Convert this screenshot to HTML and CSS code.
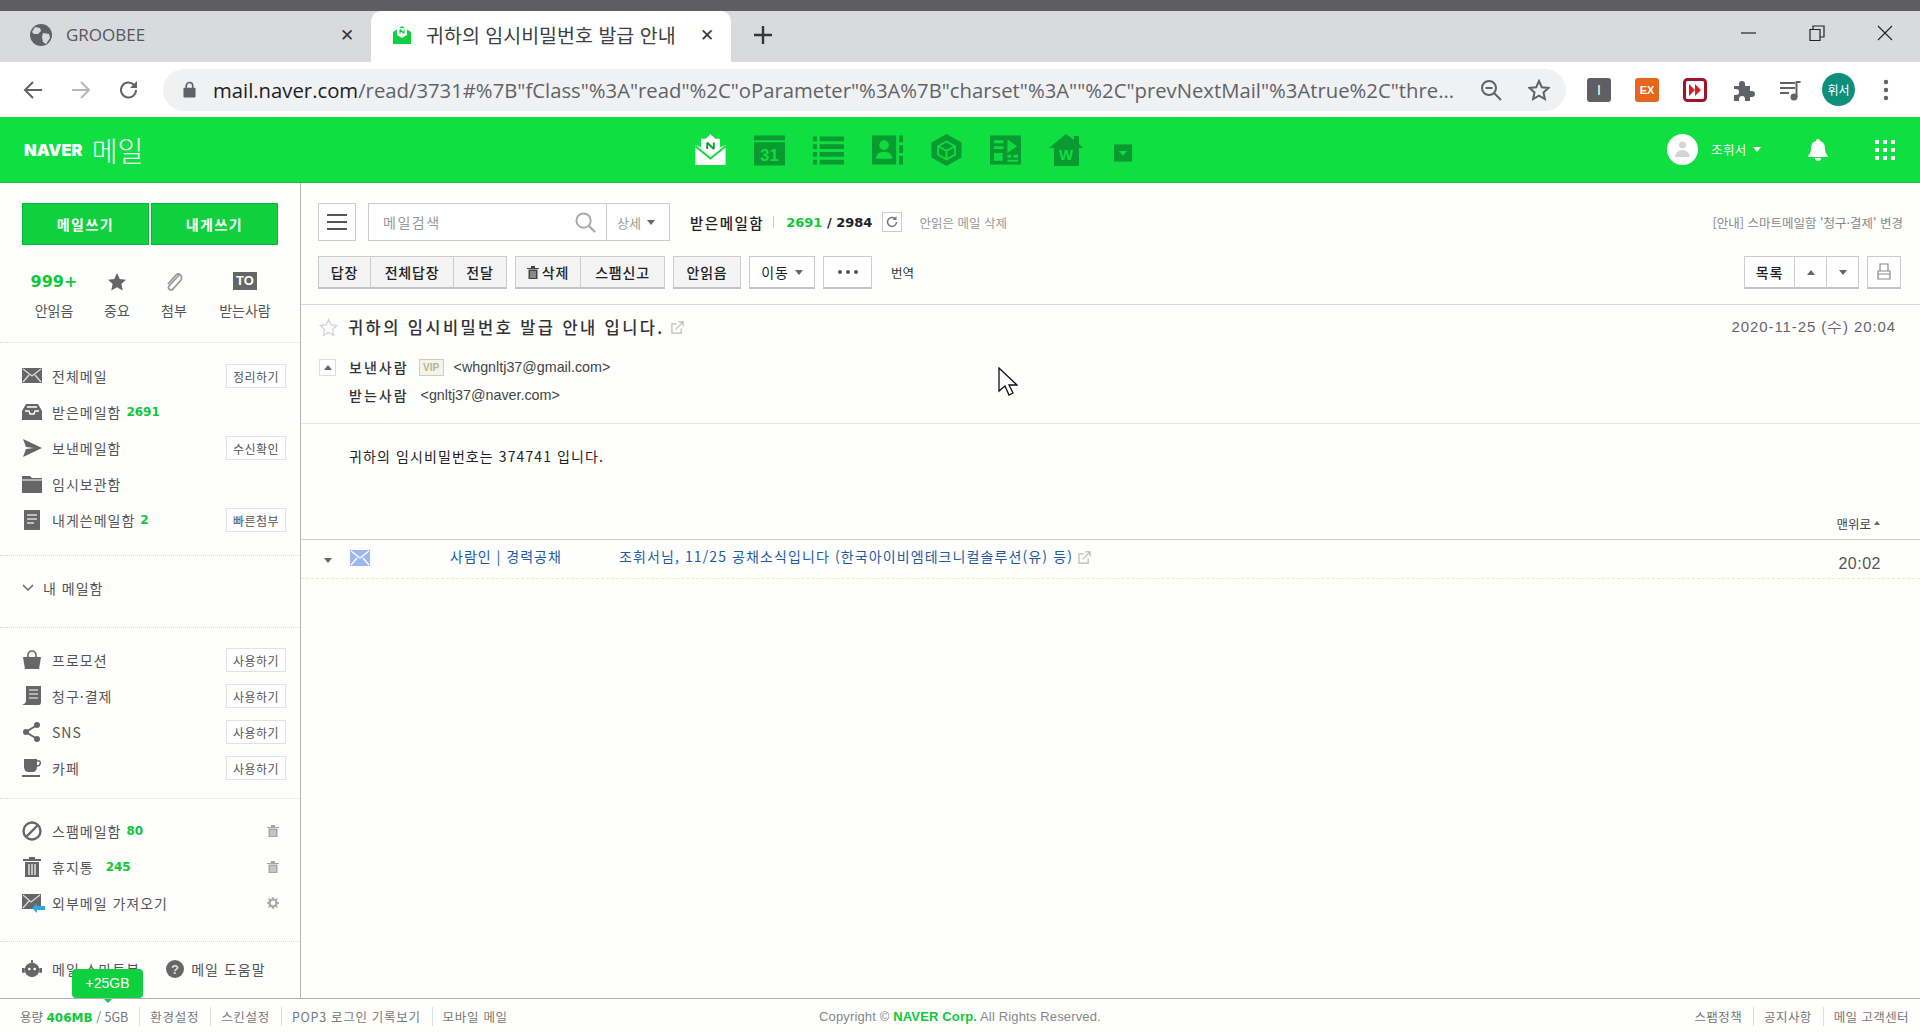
FILE: index.html
```html
<!DOCTYPE html>
<html lang="ko">
<head>
  <meta charset="UTF-8">
  <title>귀하의 임시비밀번호 발급 안내</title>
  <link rel="stylesheet" href="styles.css">
</head>
<body>
  <!-- browser chrome -->
  <div class="top-strip"></div>
  <div class="tabbar">
    <div class="tab">
      <svg class="tab-icon" viewBox="0 0 22 22"><circle cx="11" cy="11" r="11" fill="#5f6368"/><path d="M5 3l5 1 1 3-3 3-4 0-2-2zM13 9l6 1 1 4-4 6-3-2-1-5z" fill="#d8dadd"/></svg>
      <span class="tab-title">GROOBEE</span>
      <span class="tab-close">✕</span>
    </div>
    <div class="tab tab-active">
      <svg class="tab-icon" viewBox="0 0 20 20"><path d="M1 7l9-6 9 6v12H1z" fill="#0fd13f"/><path d="M5 3h10v7l-5 3-5-3z" fill="#fff"/><path d="M8 4.500v4M8 4.500l4 4M12 4.500v4" stroke="#0fd13f" stroke-width="1.200" fill="none"/></svg>
      <span class="tab-title tab-title-ko">귀하의 임시비밀번호 발급 안내</span>
      <span class="tab-close">✕</span>
    </div>
    <svg class="new-tab" viewBox="0 0 18 18"><path d="M9 0v18M0 9h18" stroke="#35363a" stroke-width="2.400"/></svg>
    <div class="win-controls">
      <svg viewBox="0 0 16 16"><path d="M0 8h15" stroke="#222" stroke-width="1.200"/></svg>
      <svg viewBox="0 0 16 16"><path d="M1 4.500h10v11H1zM4 4V1h11v11h-4" stroke="#222" stroke-width="1.200" fill="none"/></svg>
      <svg viewBox="0 0 16 16"><path d="M1 1l14 14M15 1L1 15" stroke="#222" stroke-width="1.100"/></svg>
    </div>
  </div>
  <div class="toolbar">
    <svg class="nav-icon" viewBox="0 0 20 20"><path d="M19 10H2M10 2l-8 8 8 8" stroke="#5f6368" stroke-width="2" fill="none"/></svg>
    <svg class="nav-icon" viewBox="0 0 20 20"><path d="M1 10h17M10 2l8 8-8 8" stroke="#b5b7ba" stroke-width="2" fill="none"/></svg>
    <svg class="nav-icon" viewBox="0 0 20 20"><path d="M17 10a7.500 7.500 0 1 1-2.200-5.300L17 7" stroke="#5f6368" stroke-width="2" fill="none"/><path d="M18 1v7h-7z" fill="#5f6368"/></svg>
    <div class="omnibox">
      <svg class="lock" viewBox="0 0 14 18"><path d="M3.500 8V5a3.500 3.500 0 0 1 7 0v3" stroke="#5f6368" stroke-width="1.800" fill="none"/><rect x="0.500" y="7" width="13" height="10.500" rx="1" fill="#5f6368"/></svg>
      <div class="url"><b>mail.naver.com</b>/read/3731#%7B"fClass"%3A"read"%2C"oParameter"%3A%7B"charset"%3A""%2C"prevNextMail"%3Atrue%2C"thre...</div>
      <svg class="omni-icon" viewBox="0 0 22 22"><circle cx="9" cy="9" r="7" stroke="#5f6368" stroke-width="2" fill="none"/><path d="M14 14l7 7M5.500 9h7" stroke="#5f6368" stroke-width="2"/></svg>
      <svg class="omni-icon" viewBox="0 0 22 22"><path d="M11 2l2.800 6.200 6.700.7-5 4.500 1.400 6.600L11 16.600 5.100 20l1.400-6.600-5-4.500 6.700-.7z" stroke="#5f6368" stroke-width="2" fill="none"/></svg>
    </div>
    <div class="extensions">
      <span class="ext ext-i">I</span>
      <span class="ext ext-ex">EX</span>
      <svg class="ext-svg" viewBox="0 0 24 24"><rect x="1.500" y="1.500" width="21" height="21" rx="3" fill="#fff" stroke="#a3112b" stroke-width="3"/><path d="M6 6l6 6-6 6zM12 6l6 6-6 6z" fill="#d91c2a"/></svg>
      <svg class="ext-svg" viewBox="0 0 24 24"><path d="M3 8h5V6a3 3 0 0 1 6 0v2h5v5h2a3 3 0 0 1 0 6h-2v4h-5v-2a3 3 0 0 0-6 0v2H3v-6h2a3 3 0 0 0 0-6H3z" fill="#5f6368"/></svg>
      <svg class="ext-svg" viewBox="0 0 24 24"><path d="M1 5h15M1 10h15M1 15h9" stroke="#5f6368" stroke-width="2"/><circle cx="15" cy="19" r="3.500" fill="#5f6368"/><path d="M17.500 19V4h4" stroke="#5f6368" stroke-width="2" fill="none"/></svg>
      <span class="profile">휘서</span>
      <svg class="kebab" viewBox="0 0 6 24"><circle cx="3" cy="4" r="2.200" fill="#5f6368"/><circle cx="3" cy="12" r="2.200" fill="#5f6368"/><circle cx="3" cy="20" r="2.200" fill="#5f6368"/></svg>
    </div>
  </div>

  <!-- naver header -->
  <header class="gnb">
    <div class="logo"><span class="logo-naver">NAVER</span><span class="logo-mail">메일</span></div>
    <nav class="apps">
      <svg class="app" viewBox="0 0 32 34"><path d="M16 0l5 5h5v9l6-2v21H0V12l6 2V5h5z" fill="#fff"/><path d="M0 13l16 13 16-13" stroke="#0fdc3f" stroke-width="2.200" fill="none"/><path d="M12.500 9v7M12.500 9l7 7M19.500 9v7" stroke="#0a9a32" stroke-width="2" fill="none"/></svg>
      <svg class="app" viewBox="0 0 32 32"><path d="M0 1h32v5H0z" fill="#0a9a32"/><path d="M0 8h32v24H0z" fill="#0a9a32"/><text x="16" y="27" text-anchor="middle" class="app-text">31</text></svg>
      <svg class="app" viewBox="0 0 32 32"><path d="M0 2h4v5H0zM7 2h25v5H7zM0 10h4v5H0zM7 10h25v5H7zM0 18h4v5H0zM7 18h25v5H7zM0 26h4v5H0zM7 26h25v5H7z" fill="#0a9a32"/></svg>
      <svg class="app" viewBox="0 0 32 32"><path d="M0 1h25v30H0zM28 1h4v7h-4zM28 11h4v8h-4zM28 22h4v9h-4z" fill="#0a9a32"/><circle cx="12.500" cy="11" r="5" fill="#0fdc3f"/><path d="M4 25c1-6 4-7 8.500-7s7.500 1 8.500 7z" fill="#0fdc3f"/></svg>
      <svg class="app" viewBox="0 0 32 34"><path d="M16 0l16 9v16l-16 9L0 25V9z" fill="#0a9a32"/><path d="M16 8l9 5v9l-9 5-9-5v-9zM7 13l9 5 9-5M16 18v9" stroke="#0fdc3f" stroke-width="2" fill="none"/></svg>
      <svg class="app" viewBox="0 0 32 32"><path d="M0 1h32v30H0z" fill="#0a9a32"/><path d="M4 6h10v3H4zM4 12h10v3H4zM4 19h9v8H4zM18 5l10 7-10 7zM18 21h4v3h-4zM24 21h5v3h-5zM18 26h11v2H18z" fill="#0fdc3f"/></svg>
      <svg class="app app-home" viewBox="0 0 34 32"><path d="M17 0l8 6V2h5v8l4 4h-4v18H5V14H0z" fill="#0a9a32"/><text x="17" y="26" text-anchor="middle" class="app-text app-text-w">W</text></svg>
      <svg class="app app-more" viewBox="0 0 20 18"><rect width="19" height="18" fill="#0a9a32"/><path d="M5 7h9l-4.500 5z" fill="#0fdc3f"/></svg>
    </nav>
    <div class="gnb-right">
      <svg class="avatar" viewBox="0 0 31 31"><circle cx="15.500" cy="15.500" r="15.500" fill="#fff"/><circle cx="15.500" cy="11" r="3.500" fill="#d4d4d4"/><path d="M8 23c1-5 4-7 7.500-7s6.500 2 7.500 7z" fill="#d4d4d4"/></svg>
      <span class="user-name">조휘서</span>
      <span class="user-caret"></span>
      <svg class="bell" viewBox="0 0 20 22"><path d="M10 0c1.200 0 2 .8 2 2 3.500 1 5 4 5 7 0 4 1 6 3 8v1H0v-1c2-2 3-4 3-8 0-3 1.500-6 5-7 0-1.200.8-2 2-2zM7 19h6a3 3 0 0 1-6 0z" fill="#fff"/></svg>
      <div class="grid-menu"><i></i><i></i><i></i><i></i><i></i><i></i><i></i><i></i><i></i></div>
    </div>
  </header>

  <div class="layout">
    <aside class="side">
      <div class="compose">
        <button class="compose-btn">메일쓰기</button>
        <button class="compose-btn">내게쓰기</button>
      </div>
      <div class="quick">
        <div class="quick-item quick-unread"><strong>999+</strong><span>안읽음</span></div>
        <div class="quick-item quick-star">
          <svg viewBox="0 0 20 20"><path d="M10 1l2.800 6 6.200.7-4.600 4.300 1.300 6.500L10 15.300 4.300 18.500 5.600 12 1 7.700 7.200 7z" fill="#666"/></svg>
          <span>중요</span>
        </div>
        <div class="quick-item quick-clip">
          <svg viewBox="0 0 20 20"><path d="M15 3L5 14c-2 3 2 5 4 3l8-9c2-4-2-8-5-5L4 12" stroke="#9a9a9a" stroke-width="1.800" fill="none"/></svg>
          <span>첨부</span>
        </div>
        <div class="quick-item quick-to"><b class="to-badge">TO</b><span>받는사람</span></div>
      </div>

      <div class="side-sec sec-main">
        <div class="side-row">
          <svg class="row-icon" viewBox="0 0 20 18"><path d="M0 1h20v15H0z" fill="#666"/><path d="M1 2l9 7 9-7M1 15l6-7M19 15l-6-7" stroke="#ddd" stroke-width="1.300" fill="none"/></svg>
          <span class="row-label">전체메일</span><button class="row-btn">정리하기</button>
        </div>
        <div class="side-row">
          <svg class="row-icon" viewBox="0 0 20 18"><path d="M4 1h12l4 7v9H0V8z" fill="#666"/><path d="M3 8h4l1 3h4l1-3h4M5 4h10" stroke="#fff" stroke-width="1.300" fill="none"/></svg>
          <span class="row-label">받은메일함</span><em class="count">2691</em>
        </div>
        <div class="side-row">
          <svg class="row-icon" viewBox="0 0 20 18"><path d="M1 0l19 9-19 9 3-8 8-1-8-1z" fill="#666"/></svg>
          <span class="row-label">보낸메일함</span><button class="row-btn">수신확인</button>
        </div>
        <div class="side-row">
          <svg class="row-icon" viewBox="0 0 20 18"><path d="M0 1h8l2 2h10v15H0z" fill="#666"/><path d="M0 5h20" stroke="#fff" stroke-width="1"/></svg>
          <span class="row-label">임시보관함</span>
        </div>
        <div class="side-row">
          <svg class="row-icon" viewBox="0 0 20 20"><path d="M2 0h16v20H2z" fill="#666"/><path d="M5 5h10M5 9h10M5 13h7" stroke="#ddd" stroke-width="1.500"/></svg>
          <span class="row-label">내게쓴메일함</span><em class="count">2</em>
          <button class="row-btn">빠른첨부</button>
        </div>
      </div>

      <div class="side-sec sec-my">
        <div class="side-row my-row">
          <svg class="my-arrow" viewBox="0 0 12 8"><path d="M1 1l5 5 5-5" stroke="#666" stroke-width="1.500" fill="none"/></svg>
          <span class="row-label">내 메일함</span>
        </div>
      </div>

      <div class="side-sec sec-apps">
        <div class="side-row">
          <svg class="row-icon" viewBox="0 0 20 20"><path d="M6 8V5a4 4 0 0 1 8 0v3" stroke="#666" stroke-width="1.600" fill="none"/><path d="M1 7h18l-2 12H3z" fill="#666"/></svg>
          <span class="row-label">프로모션</span><button class="row-btn">사용하기</button>
        </div>
        <div class="side-row">
          <svg class="row-icon" viewBox="0 0 20 20"><path d="M4 0h15v16c0 2-1 3-2 3H0c2-1 4-2 4-4z" fill="#666"/><path d="M7 4h9M7 8h9M7 12h9" stroke="#ccc" stroke-width="1.300"/></svg>
          <span class="row-label">청구·결제</span><button class="row-btn">사용하기</button>
        </div>
        <div class="side-row">
          <svg class="row-icon" viewBox="0 0 20 20"><path d="M15 3L4 10l11 7" stroke="#666" stroke-width="2" fill="none"/><circle cx="15" cy="3" r="3" fill="#666"/><circle cx="4" cy="10" r="3" fill="#666"/><circle cx="15" cy="17" r="3" fill="#666"/></svg>
          <span class="row-label">SNS</span><button class="row-btn">사용하기</button>
        </div>
        <div class="side-row">
          <svg class="row-icon" viewBox="0 0 20 20"><path d="M2 1h13v8c0 3-2 5-4 5H6c-2 0-4-2-4-5z" fill="#666"/><path d="M15 3h2c2 0 2 5-2 5" stroke="#666" stroke-width="1.400" fill="none"/><path d="M0 17h18v2H0z" fill="#666"/></svg>
          <span class="row-label">카페</span><button class="row-btn">사용하기</button>
        </div>
      </div>

      <div class="side-sec sec-trash">
        <div class="side-row">
          <svg class="row-icon" viewBox="0 0 20 20"><circle cx="10" cy="10" r="8.500" stroke="#666" stroke-width="2.400" fill="none"/><path d="M15.500 4.500l-11 11" stroke="#666" stroke-width="2.400"/></svg>
          <span class="row-label">스팸메일함</span><em class="count">80</em>
          <svg class="row-tool" viewBox="0 0 12 12"><path d="M0 2h12v1H0zM4 0h4v2H4zM1.500 3.500h9V12h-9z" fill="#a5a5a5"/><path d="M4 5v6M6 5v6M8 5v6" stroke="#fff" stroke-width=".7"/></svg>
        </div>
        <div class="side-row">
          <svg class="row-icon" viewBox="0 0 20 20"><path d="M1 2h18v2H1zM7 0h6v2H7zM3 5h14v15H3z" fill="#666"/><path d="M7 7v11M10 7v11M13 7v11" stroke="#fff" stroke-width="1.200"/></svg>
          <span class="row-label">휴지통</span><em class="count count-wide">245</em>
          <svg class="row-tool" viewBox="0 0 12 12"><path d="M0 2h12v1H0zM4 0h4v2H4zM1.500 3.500h9V12h-9z" fill="#a5a5a5"/><path d="M4 5v6M6 5v6M8 5v6" stroke="#fff" stroke-width=".7"/></svg>
        </div>
        <div class="side-row">
          <svg class="row-icon row-icon-ext" viewBox="0 0 23 20"><path d="M0 1h19v15H0z" fill="#666"/><path d="M1 2l8 7 9-7M1 15l6-7" stroke="#ddd" stroke-width="1.200" fill="none"/><path d="M10 15l5-5v3h8v4h-8v3z" fill="#2ea9e0"/></svg>
          <span class="row-label">외부메일 가져오기</span>
          <svg class="row-tool" viewBox="0 0 12 12"><circle cx="6" cy="6" r="3.500" stroke="#a5a5a5" stroke-width="2.200" fill="none"/><path d="M6 0v2M6 10v2M0 6h2M10 6h2M1.500 1.500l1.500 1.500M9 9l1.500 1.500M10.500 1.500L9 3M3 9l-1.500 1.500" stroke="#a5a5a5" stroke-width="1.400"/></svg>
        </div>
      </div>

      <div class="side-sec sec-help">
        <div class="side-row">
          <svg class="row-icon" viewBox="0 0 22 20"><path d="M11 0v4" stroke="#666" stroke-width="2"/><circle cx="11" cy="11" r="8" fill="#666"/><path d="M0 9h3v5H0zM19 9h3v5h-3z" fill="#666"/><circle cx="8" cy="10" r="1.500" fill="#fff"/><circle cx="14" cy="10" r="1.500" fill="#fff"/></svg>
          <span class="row-label">메일 스마트봇</span>
          <svg class="help-icon" viewBox="0 0 18 18"><circle cx="9" cy="9" r="9" fill="#666"/><text x="9" y="13.500" text-anchor="middle" class="help-q">?</text></svg>
          <span class="row-label">메일 도움말</span>
        </div>
      </div>
      <div class="tooltip">+25GB</div>
    </aside>

    <main class="content">
      <div class="search-bar">
        <button class="menu-btn"><i></i><i></i><i></i></button>
        <div class="search">
          <span class="search-text">메일검색</span>
          <svg class="search-icon" viewBox="0 0 22 22"><circle cx="9" cy="9" r="7.500" stroke="#aaa" stroke-width="2" fill="none"/><path d="M14.500 14.500l6.500 6.500" stroke="#aaa" stroke-width="2.400"/></svg>
          <span class="search-more">상세<i class="caret"></i></span>
        </div>
        <strong class="box-name">받은메일함</strong>
        <span class="box-sep"></span>
        <span class="box-count"><em>2691</em> / 2984</span>
        <button class="refresh"><svg viewBox="0 0 14 14"><path d="M11.500 7a4.500 4.500 0 1 1-1.500-3.400" stroke="#777" stroke-width="1.500" fill="none"/><path d="M11.500 1v4h-4z" fill="#777"/></svg></button>
        <span class="unread-del">안읽은 메일 삭제</span>
        <span class="notice">[안내] 스마트메일함 '청구·결제' 변경</span>
      </div>

      <div class="actions">
        <div class="btn-group">
          <button class="act act-reply">답장</button>
          <button class="act act-all">전체답장</button>
          <button class="act act-fwd">전달</button>
        </div>
        <div class="btn-group">
          <button class="act act-del"><svg viewBox="0 0 12 13"><path d="M0 2h12v1H0zM4 0h4v2H4zM1.500 3.500h9V13h-9z" fill="#444"/><path d="M4 5v7M6 5v7M8 5v7" stroke="#f3f3f3" stroke-width=".8"/></svg>삭제</button>
          <button class="act act-spam">스팸신고</button>
        </div>
        <button class="act act-unread">안읽음</button>
        <button class="act act-plain act-move">이동<i class="caret"></i></button>
        <button class="act act-plain act-dots"><i></i><i></i><i></i></button>
        <span class="translate">번역</span>
        <div class="btn-group btn-right">
          <button class="act act-plain act-list">목록</button>
          <button class="act act-plain act-arrow"><i class="tri-up"></i></button>
          <button class="act act-plain act-arrow"><i class="caret"></i></button>
        </div>
        <button class="act act-plain act-print"><svg viewBox="0 0 14 18"><path d="M3 1h8v7H3zM1 8h12v8H1zM1 11h12" stroke="#888" stroke-width="1.200" fill="none"/></svg></button>
      </div>

      <div class="mail-head">
        <div class="subject-row">
          <svg class="star" viewBox="0 0 20 20"><path d="M10 1.500l2.600 5.800 6.100.7-4.500 4.200 1.200 6.200L10 15.300l-5.400 3.100 1.200-6.200L1.300 8l6.100-.7z" stroke="#d5d5d5" stroke-width="1.400" fill="none"/></svg>
          <h1 class="subject">귀하의 임시비밀번호 발급 안내 입니다.</h1>
          <svg class="popup" viewBox="0 0 14 14"><path d="M6 3H1v10h10V8M5 9l8-8M8 1h5v5" stroke="#bbb" stroke-width="1.300" fill="none"/></svg>
          <span class="mail-date">2020-11-25 (수) 20:04</span>
        </div>
        <div class="addr-row">
          <button class="fold"><i class="tri-up"></i></button>
          <b class="addr-label">보낸사람</b>
          <span class="vip">VIP</span>
          <span class="addr">&lt;whgnltj37@gmail.com&gt;</span>
        </div>
        <div class="addr-row">
          <b class="addr-label">받는사람</b>
          <span class="addr addr-to">&lt;gnltj37@naver.com&gt;</span>
        </div>
      </div>

      <div class="mail-body">귀하의 임시비밀번호는 374741 입니다.</div>
      <div class="to-top">맨위로<i class="tri-up"></i></div>

      <div class="next-mail">
        <i class="caret next-caret"></i>
        <svg class="next-icon" viewBox="0 0 20 16"><path d="M0 0h20v16H0z" fill="#9db9ec"/><path d="M1 1l9 7 9-7M1 15l6-7M19 15l-6-7" stroke="#fff" stroke-width="1.300" fill="none"/></svg>
        <a class="next-from">사람인 | 경력공채</a>
        <a class="next-subject">조휘서님, 11/25 공채소식입니다 (한국아이비엠테크니컬솔루션(유) 등)</a>
        <svg class="popup" viewBox="0 0 14 14"><path d="M6 3H1v10h10V8M5 9l8-8M8 1h5v5" stroke="#bbb" stroke-width="1.300" fill="none"/></svg>
        <span class="next-time">20:02</span>
      </div>
    </main>
  </div>

  <footer class="foot">
    <div class="foot-side foot-left">
      <span>용량 <b>406MB</b> / 5GB</span><span>환경설정</span><span>스킨설정</span><span>POP3 로그인 기록보기</span><span>모바일 메일</span>
    </div>
    <div class="copy">Copyright © <b>NAVER Corp.</b> All Rights Reserved.</div>
    <div class="foot-side foot-right">
      <span>스팸정책</span><span>공지사항</span><span>메일 고객센터</span>
    </div>
  </footer>

  <svg class="cursor" viewBox="0 0 20 29"><path d="M1 1v23l6-5 4 9 4-2-4-8h8z" fill="#fff" stroke="#111" stroke-width="1.300"/></svg>
</body>
</html>
```

FILE: styles.css
```css
* {
  box-sizing: border-box;
}

html, body {
  height: 100%;
}

body {
  margin: 0;
  display: flex;
  flex-direction: column;
  height: 1032px;
  overflow: hidden;
  background: #fefefd;
  color: #555;
  font-family: "Noto Sans CJK KR", "Liberation Sans", sans-serif;
  font-size: 14px;
}

button {
  font: inherit;
  padding: 0;
  background: none;
  cursor: pointer;
}

em, i {
  font-style: normal;
}

svg {
  display: block;
  flex: none;
}

/* browser chrome */
.top-strip {
  height: 11px;
  background: #5e5e62;
}

.tabbar {
  display: flex;
  align-items: center;
  height: 51px;
  background: #d8dadd;
}

.tab {
  display: flex;
  align-items: center;
  align-self: stretch;
  width: 371px;
  padding: 0 14px 4px 30px;
  color: #55585c;
  font-family: "Open Sans", sans-serif;
  font-size: 17px;
}

.tab-active {
  width: 360px;
  padding-left: 21px;
  background: #fff;
  border-radius: 10px 10px 0 0;
  color: #3c4043;
}

.tab-icon {
  width: 22px;
  height: 22px;
  margin-right: 14px;
}

.tab-active .tab-icon {
  width: 20px;
  height: 20px;
}

.tab-title {
  flex: 1;
  white-space: nowrap;
  overflow: hidden;
}

.tab-title-ko {
  font-family: "Noto Sans CJK KR", sans-serif;
  font-size: 19.500px;
}

.tab-close {
  width: 20px;
  color: #35363a;
  font-family: "DejaVu Sans", sans-serif;
  font-size: 17px;
  font-weight: bold;
  text-align: center;
}

.new-tab {
  width: 18px;
  height: 18px;
  margin: 0 0 4px 23px;
}

.win-controls {
  display: flex;
  gap: 52px;
  margin: 0 27px 8px auto;
}

.win-controls svg {
  width: 16px;
  height: 16px;
}

.toolbar {
  display: flex;
  align-items: center;
  height: 55px;
  padding-left: 23px;
  background: #fff;
}

.nav-icon {
  width: 20px;
  height: 20px;
  margin-right: 28px;
}

.omnibox {
  display: flex;
  align-items: center;
  width: 1403px;
  height: 42px;
  margin-left: -4px;
  padding: 0 16px 0 20px;
  background: #f0f1f3;
  border-radius: 21px;
}

.lock {
  width: 13px;
  height: 17px;
  margin-right: 17px;
}

.url {
  flex: 1;
  color: #5f6368;
  font-family: "Open Sans", sans-serif;
  font-size: 20.300px;
  white-space: nowrap;
  overflow: hidden;
}

.url b {
  color: #202124;
  font-weight: normal;
}

.omni-icon {
  width: 22px;
  height: 22px;
  margin-left: 26px;
}

.extensions {
  display: flex;
  align-items: center;
  margin-left: 21px;
}

.ext {
  display: flex;
  align-items: center;
  justify-content: center;
  width: 24px;
  height: 24px;
  margin-right: 24px;
  border-radius: 3px;
  color: #fff;
  font-family: "Liberation Sans", sans-serif;
}

.ext-i {
  background: #5f5f63;
  font-size: 14px;
}

.ext-ex {
  background: #e8651d;
  font-size: 11px;
  font-weight: bold;
}

.ext-svg {
  width: 24px;
  height: 24px;
  margin-right: 24px;
}

.profile {
  display: flex;
  align-items: center;
  justify-content: center;
  width: 33px;
  height: 33px;
  margin-left: -5px;
  border-radius: 50%;
  background: #0d8f7c;
  color: #fff;
  font-size: 12px;
}

.kebab {
  width: 6px;
  height: 24px;
  margin-left: 28px;
}

/* naver header */
.gnb {
  display: flex;
  align-items: center;
  height: 66px;
  background: #0fdf40;
  border-bottom: 1px solid #0cc437;
}

.logo {
  display: flex;
  align-items: center;
  width: 695px;
  padding-left: 24px;
  color: #fff;
}

.logo-naver {
  font-family: Inter, "Liberation Sans", sans-serif;
  font-size: 16.500px;
  font-weight: 900;
}

.logo-mail {
  margin-left: 9px;
  font-size: 28px;
  font-weight: 300;
  line-height: 1;
}

.apps {
  display: flex;
  align-items: center;
  gap: 28px;
}

.app {
  width: 31px;
  height: 32px;
}

.app-home {
  width: 34px;
}

.app-more {
  width: 19px;
  height: 18px;
  margin: 6px 0 0 3px;
}

.app-text {
  fill: #0fdf40;
  font-family: "Liberation Sans", sans-serif;
  font-size: 17px;
  font-weight: bold;
}

.app-text-w {
  font-size: 15px;
}

.gnb-right {
  display: flex;
  align-items: center;
  margin-left: 534px;
  color: #fff;
}

.avatar {
  width: 31px;
  height: 31px;
}

.user-name {
  margin-left: 13px;
  font-size: 12.500px;
  letter-spacing: .4px;
}

.user-caret {
  margin-left: 6px;
  border: 4px solid transparent;
  border-top: 5px solid #fff;
  border-bottom: 0;
}

.bell {
  width: 20px;
  height: 22px;
  margin-left: 47px;
}

.grid-menu {
  display: grid;
  grid-template-columns: repeat(3, 4px);
  gap: 4px;
  margin-left: 47px;
}

.grid-menu i {
  height: 4px;
  background: #fff;
}

/* sidebar */
.layout {
  display: flex;
  flex: 1;
  min-height: 0;
}

.side {
  position: relative;
  width: 301px;
  flex: none;
  border-right: 1px solid #b5b5b5;
}

.compose {
  display: flex;
  gap: 2px;
  padding: 20px 0 0 22px;
}

.compose-btn {
  width: 127px;
  height: 42px;
  border: 1px solid #0ab838;
  background: #0fd13f;
  color: #fff;
  font-size: 14px;
  font-weight: bold;
  letter-spacing: 1.500px;
}

.quick {
  display: flex;
  height: 98px;
  padding-top: 27px;
  border-bottom: 1px dotted #d8d8e4;
}

.quick-item {
  display: flex;
  flex-direction: column;
  align-items: center;
  gap: 8px;
  font-size: 14px;
  line-height: 20px;
}

.quick-item svg {
  width: 20px;
  height: 20px;
}

.quick-unread {
  margin-left: 31px;
  width: 46px;
}

.quick-unread strong {
  color: #0fc83a;
  font-family: "DejaVu Sans", sans-serif;
  font-size: 16px;
  white-space: nowrap;
}

.quick-star {
  margin-left: 26px;
  width: 28px;
}

.quick-clip {
  margin-left: 29px;
  width: 28px;
}

.quick-to {
  margin-left: 31px;
  width: 52px;
  white-space: nowrap;
}

.to-badge {
  display: block;
  width: 24px;
  height: 18px;
  margin: 0 0 2px;
  background: #666;
  color: #fff;
  font-family: "Liberation Sans", sans-serif;
  font-size: 13px;
  line-height: 18px;
  text-align: center;
}

.side-sec {
  border-bottom: 1px dotted #d8d8e4;
}

.sec-main {
  height: 213px;
  padding-top: 15px;
}

.sec-my {
  height: 72px;
  padding-top: 14px;
}

.sec-apps {
  height: 171px;
  padding-top: 14px;
}

.sec-trash {
  height: 143px;
  padding-top: 14px;
}

.sec-help {
  border-bottom: 0;
  padding-top: 9px;
}

.side-row {
  display: flex;
  align-items: center;
  height: 36px;
  padding: 0 14px 0 22px;
}

.row-icon {
  width: 20px;
  height: 20px;
  margin-right: 10px;
}

.row-icon-ext {
  width: 23px;
  margin-right: 7px;
}

.row-label {
  letter-spacing: 1px;
  white-space: nowrap;
}

.count {
  margin-left: 5px;
  color: #0fc83a;
  font-family: "DejaVu Sans", sans-serif;
  font-size: 12px;
  font-weight: bold;
}

.count-wide {
  margin-left: 12px;
}

.row-btn {
  width: 60px;
  height: 24px;
  margin-left: auto;
  border: 1px solid #e2e2e2;
  background: #fff;
  color: #555;
  font-size: 12px;
  letter-spacing: .5px;
}

.row-tool {
  width: 12px;
  height: 12px;
  margin: 0 7px 0 auto;
}

.my-row {
  padding-left: 22px;
}

.my-arrow {
  width: 12px;
  height: 8px;
  margin-right: 9px;
}

.help-icon {
  width: 18px;
  height: 18px;
  margin: 0 7px 0 26px;
}

.help-q {
  fill: #ddd;
  font-family: "Liberation Sans", sans-serif;
  font-size: 13px;
  font-weight: bold;
}

.tooltip {
  position: absolute;
  left: 72px;
  bottom: 0;
  width: 71px;
  height: 29px;
  border-radius: 4px;
  background: #0fd13f;
  color: #fff;
  font-family: "Liberation Sans", sans-serif;
  font-size: 14px;
  line-height: 29px;
  text-align: center;
}

.tooltip::after {
  content: "";
  position: absolute;
  left: 31px;
  top: 29px;
  border: 5px solid transparent;
  border-top-color: #0fd13f;
  border-bottom: 0;
}

/* mail pane */
.content {
  flex: 1;
  min-width: 0;
}

.search-bar {
  display: flex;
  align-items: center;
  height: 38px;
  margin: 20px 17px 0;
  color: #333;
}

.menu-btn {
  display: flex;
  flex-direction: column;
  align-items: center;
  justify-content: center;
  gap: 5px;
  width: 38px;
  height: 38px;
  border: 1px solid #ccc;
  background: #fff;
}

.menu-btn i {
  width: 20px;
  height: 2px;
  background: #555;
}

.search {
  display: flex;
  align-items: center;
  width: 302px;
  height: 38px;
  margin-left: 12px;
  padding-left: 14px;
  border: 1px solid #ccc;
  background: #fff;
}

.search-text {
  color: #999;
  letter-spacing: 1.500px;
}

.search-icon {
  width: 21px;
  height: 21px;
  margin-left: auto;
  margin-right: 10px;
}

.search-more {
  display: flex;
  align-items: center;
  width: 63px;
  height: 36px;
  padding-left: 10px;
  border-left: 1px solid #ccc;
  color: #999;
  font-size: 13px;
}

.caret {
  display: inline-block;
  margin-left: 6px;
  border: 4.500px solid transparent;
  border-top: 5px solid #666;
  border-bottom: 0;
}

.tri-up {
  display: inline-block;
  border: 4.500px solid transparent;
  border-bottom: 5px solid #666;
  border-top: 0;
}

.box-name {
  margin-left: 20px;
  color: #222;
  font-size: 14.500px;
  font-weight: 500;
  letter-spacing: 1.500px;
}

.box-sep {
  width: 1px;
  height: 12px;
  margin: 0 12px 0 9px;
  background: #ccc;
}

.box-count {
  color: #222;
  font-family: "DejaVu Sans", sans-serif;
  font-size: 13px;
  font-weight: bold;
  white-space: nowrap;
}

.box-count em {
  color: #0fc83a;
}

.refresh {
  width: 20px;
  height: 20px;
  margin-left: 10px;
  padding: 2px;
  border: 1px solid #ccc;
  background: #fff;
}

.unread-del {
  margin-left: 17px;
  color: #999;
  font-size: 12.500px;
}

.notice {
  margin-left: auto;
  color: #888;
  font-size: 12.500px;
}

.actions {
  display: flex;
  align-items: stretch;
  height: 33px;
  margin: 15px 19px 15px 17px;
  gap: 8px;
}

.btn-group {
  display: flex;
}

.btn-right {
  margin-left: auto;
  gap: 0;
}

.act {
  display: flex;
  align-items: center;
  justify-content: center;
  height: 33px;
  border: 1px solid #ccc;
  border-bottom: 2px solid #c4c4c8;
  background: #f4f4f4;
  color: #222;
  font-size: 14px;
  font-weight: 500;
  letter-spacing: .8px;
}

.btn-group .act + .act {
  border-left: 0;
}

.act svg {
  width: 12px;
  height: 13px;
  margin-right: 3px;
}

.act-reply { width: 53px; }
.act-all { width: 83px; }
.act-fwd { width: 53px; }
.act-del { width: 66px; }
.act-spam { width: 84px; }
.act-unread { width: 68px; }

.act-plain {
  background: #fff;
  font-weight: normal;
}

.act-move { width: 66px; }

.act-dots {
  gap: 4px;
  width: 49px;
}

.act-dots i {
  width: 4px;
  height: 4px;
  border-radius: 50%;
  background: #555;
}

.translate {
  margin-left: 11px;
  color: #333;
  font-size: 12.500px;
  line-height: 33px;
}

.act-list { width: 51px; font-weight: 500; }
.act-arrow { width: 32px; }
.act-arrow .caret { margin-left: 0; }
.act-print { width: 34px; }

.act-print svg {
  width: 14px;
  height: 18px;
  margin: 0;
}

.mail-head {
  padding: 0 24px 14px 18px;
  border-top: 1px solid #d8d8e0;
  border-bottom: 1px solid #e6e6ee;
}

.subject-row {
  display: flex;
  align-items: center;
  height: 44px;
  margin-bottom: 4px;
}

.star {
  width: 19px;
  height: 19px;
  margin-right: 10px;
}

.subject {
  margin: 0;
  color: #333;
  font-size: 16.500px;
  font-weight: 500;
  letter-spacing: 2.400px;
}

.popup {
  width: 13px;
  height: 13px;
  margin-left: 6px;
}

.mail-date {
  margin-left: auto;
  color: #666;
  font-family: "Liberation Sans", sans-serif;
  font-size: 15px;
  letter-spacing: .9px;
}

.addr-row {
  display: flex;
  align-items: center;
  height: 28px;
  padding-left: 30px;
  color: #444;
  font-size: 14px;
}

.fold {
  display: flex;
  align-items: center;
  justify-content: center;
  width: 17px;
  height: 17px;
  margin-left: -30px;
  margin-right: 13px;
  border: 1px solid #ddd;
  background: #fff;
}

.addr-label {
  color: #333;
  font-weight: 500;
  letter-spacing: 2px;
}

.vip {
  width: 25px;
  height: 17px;
  margin-left: 10px;
  border: 1px solid #ccc;
  background: #f4f4e8;
  color: #b5b59a;
  font-family: "Liberation Sans", sans-serif;
  font-size: 10px;
  font-weight: bold;
  line-height: 15px;
  text-align: center;
}

.addr {
  margin-left: 10px;
  color: #444;
  font-family: "Liberation Sans", sans-serif;
  font-size: 14.300px;
}

.addr-to {
  margin-left: 12px;
}

.mail-body {
  height: 91px;
  padding: 22px 0 0 48px;
  color: #222;
  font-size: 14px;
  letter-spacing: 1.100px;
  line-height: 20px;
}

.to-top {
  display: flex;
  align-items: center;
  justify-content: flex-end;
  gap: 3px;
  height: 25px;
  padding: 0 40px 8px 0;
  border-bottom: 1px solid #ccc;
  color: #444;
  font-size: 12.500px;
}

.to-top .tri-up {
  border-width: 0 3.500px 4px;
  border-color: transparent transparent #666;
}

.next-mail {
  display: flex;
  align-items: center;
  height: 39px;
  padding: 0 39px 6px 23px;
  border-bottom: 1px dashed #f1efaa;
  color: #1d5ba8;
  font-size: 14px;
}

.next-caret {
  margin: 8px 0 0;
}

.next-icon {
  width: 20px;
  height: 16px;
  margin: 4px 80px 0 18px;
}

.next-from {
  flex: none;
  width: 169px;
  letter-spacing: 1px;
}

.next-subject {
  letter-spacing: 1.100px;
}

.next-mail .popup {
  margin-left: 5px;
  margin-top: 2px;
}

.next-time {
  margin: 15px 0 0 auto;
  color: #555;
  font-family: "Liberation Sans", sans-serif;
  font-size: 16px;
  letter-spacing: .5px;
}

/* footer */
.foot {
  position: relative;
  display: flex;
  align-items: center;
  justify-content: space-between;
  height: 34px;
  padding: 2px 11px 0 20px;
  border-top: 1px solid #aeaeb8;
  color: #777;
  font-size: 12.500px;
}

.foot-side {
  display: flex;
}

.foot-side span + span {
  margin-left: 11px;
  padding-left: 10px;
  border-left: 1px solid #ddd;
}

.foot-left span + span {
  letter-spacing: .7px;
}

.foot-right span {
  letter-spacing: .4px;
}

.foot-left b {
  color: #0fc83a;
  font-family: "DejaVu Sans", sans-serif;
  font-size: 12px;
}

.copy {
  position: absolute;
  left: 819px;
  color: #888;
  font-family: "Liberation Sans", sans-serif;
  font-size: 13px;
  letter-spacing: .15px;
}

.copy b {
  color: #0fc83a;
}

.cursor {
  position: absolute;
  left: 998px;
  top: 367px;
  width: 20px;
  height: 29px;
}
```
